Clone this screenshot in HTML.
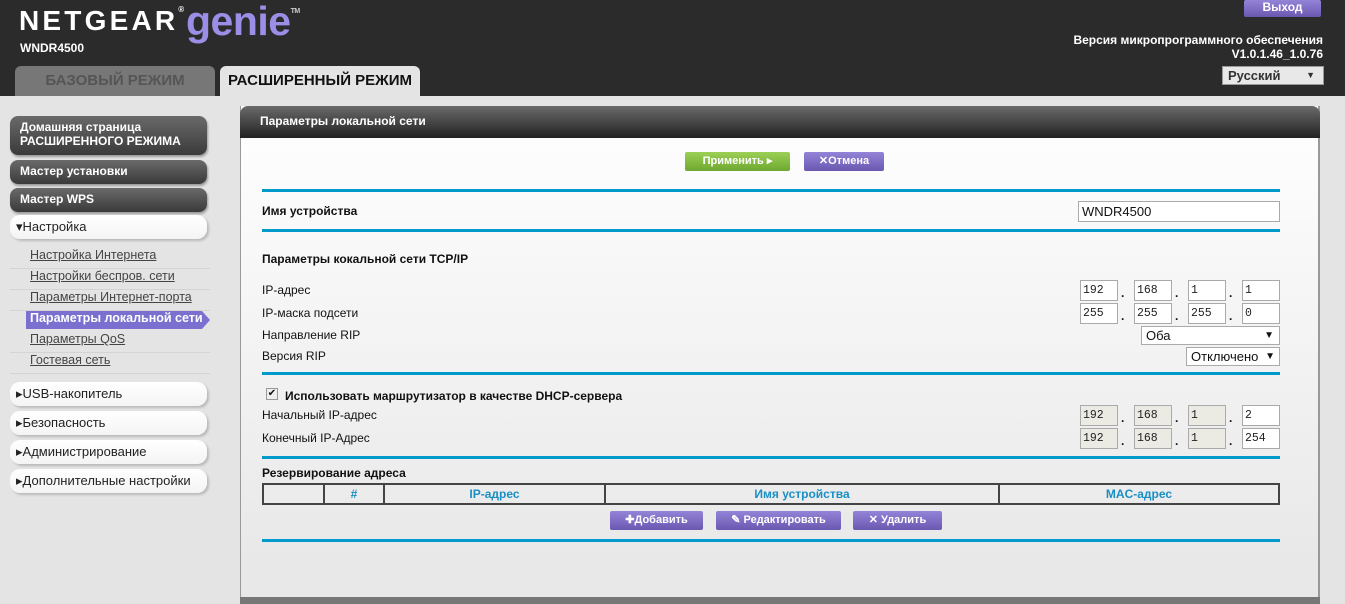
<!DOCTYPE html>
<html><head><meta charset="utf-8"><style>
*{margin:0;padding:0;box-sizing:border-box}
body{width:1345px;height:604px;overflow:hidden;background:#e4e4e4;font-family:"Liberation Sans",Arial,sans-serif;position:relative;font-size:12px;color:#111}
.a{position:absolute}
#hdr{left:0;top:0;width:1345px;height:96px;background:#2b2b2b}
.tab{top:66px;height:30px;border-radius:6px 6px 0 0;font-size:15px;font-weight:bold;text-align:center;line-height:30px}
.sb{left:10px;width:197px;border-radius:8px;color:#fff;font-weight:bold;font-size:12px;padding-left:10px;background:linear-gradient(#6a6a6a,#3a3a3a);box-shadow:1px 2px 2px #999}
.sw{left:10px;width:197px;height:24px;border-radius:10px;background:linear-gradient(#fff,#f4f4f4);box-shadow:2px 2px 2px #bbb;font-size:13px;color:#222;line-height:24px;padding-left:6px}
.sub{left:30px;font-size:12.5px;color:#444;text-decoration:underline}
.sep{left:10px;width:200px;height:1px;background:#d4d4d4}
.ln{left:262px;width:1018px;height:3px;background:#0099cc}
.lb{left:262px;font-size:12px}
.ip{width:38px;height:21px;border:1px solid #aaa;background:#fff;font-family:"Liberation Mono",monospace;font-size:11.5px;padding:3px 2px;color:#222}
.ip.g{background:#ebebe4}
.dot{font-size:12px;font-weight:bold}
.btn{height:19px;color:#fff;font-weight:bold;font-size:11px;text-align:center;line-height:19px;border-radius:2px}
.pb{background:linear-gradient(#9484d8,#6a58b0)}
</style></head><body>
<div id="hdr" class="a"></div>
<div class="a" style="left:19px;top:5px;color:#fff;font-size:28px;font-weight:bold;letter-spacing:3.2px">NETGEAR<span style="font-size:8px;vertical-align:top;letter-spacing:0">®</span></div>
<div class="a" style="left:186px;top:-2px;color:#9b8ee6;font-size:41px;font-weight:bold;letter-spacing:-0.5px">genie<span style="font-size:7px;vertical-align:top;color:#ccc;position:relative;top:10px">TM</span></div>
<div class="a" style="left:20px;top:41px;color:#fff;font-weight:bold;font-size:12px">WNDR4500</div>
<div class="a tab" style="left:15px;width:200px;background:#777;color:#555">БАЗОВЫЙ РЕЖИМ</div>
<div class="a tab" style="left:220px;width:200px;background:#e4e4e4;color:#111">РАСШИРЕННЫЙ РЕЖИМ</div>
<div class="a btn pb" style="left:1244px;top:0;width:77px;height:17px;line-height:15px;font-size:12px">Выход</div>
<div class="a" style="right:22px;top:33px;color:#fff;font-weight:bold;font-size:12px;text-align:right;line-height:14px">Версия микропрограммного обеспечения<br>V1.0.1.46_1.0.76</div>
<div class="a" style="left:1222px;top:66px;width:102px;height:19px;background:#e8e8e8;border:1px solid #999;font-weight:bold;font-size:13px;padding-left:5px;line-height:17px;color:#333">Русский<span style="position:absolute;right:8px;font-size:9px">▼</span></div>

<div class="a sb" style="top:116px;height:39px;padding-top:4px;line-height:14px">Домашняя страница<br>РАСШИРЕННОГО РЕЖИМА</div>
<div class="a sb" style="top:160px;height:24px;line-height:22px">Мастер установки</div>
<div class="a sb" style="top:188px;height:24px;line-height:22px">Мастер WPS</div>
<div class="a sw" style="top:215px">▾Настройка</div>
<div class="a sub" style="top:248px">Настройка Интернета</div><div class="a sep" style="top:268px"></div>
<div class="a sub" style="top:269px">Настройки беспров. сети</div><div class="a sep" style="top:289px"></div>
<div class="a sub" style="top:290px">Параметры Интернет-порта</div><div class="a sep" style="top:310px"></div>
<div class="a" style="left:26px;top:311px;width:184px;height:18px;background:#7b6fd0;clip-path:polygon(0 0,176px 0,100% 50%,176px 100%,0 100%)"></div>
<div class="a" style="left:30px;top:311px;color:#fff;font-weight:bold;font-size:12.5px">Параметры локальной сети</div>
<div class="a sub" style="top:332px">Параметры QoS</div><div class="a sep" style="top:352px"></div>
<div class="a sub" style="top:353px">Гостевая сеть</div><div class="a sep" style="top:373px"></div>
<div class="a sw" style="top:382px">▸USB-накопитель</div>
<div class="a sw" style="top:411px">▸Безопасность</div>
<div class="a sw" style="top:440px">▸Администрирование</div>
<div class="a sw" style="top:469px">▸Дополнительные настройки</div>

<div class="a" style="left:240px;top:106px;width:1080px;height:498px;background:linear-gradient(#fff 0,#fcfcfc 60px,#e8e8e8 460px);border-left:1px solid #999;border-right:2px solid #999"></div>
<div class="a" style="left:240px;top:106px;width:1080px;height:32px;border-radius:8px 8px 0 0;background:linear-gradient(#6a6a6a,#222);color:#fff;font-weight:bold;font-size:12px;line-height:30px;padding-left:20px">Параметры локальной сети</div>
<div class="a" style="left:240px;top:597px;width:1080px;height:7px;background:#777"></div>

<div class="a btn" style="left:685px;top:152px;width:105px;background:linear-gradient(#9ccf55,#6ea830)">Применить ▸</div>
<div class="a btn pb" style="left:804px;top:152px;width:80px">✕Отмена</div>

<div class="a ln" style="top:189px"></div>
<div class="a lb" style="top:204px;font-weight:bold">Имя устройства</div>
<div class="a" style="left:1078px;top:201px;width:202px;height:21px;border:1px solid #aaa;background:#fff;padding:2px 3px;font-size:13px">WNDR4500</div>
<div class="a ln" style="top:229px"></div>
<div class="a lb" style="top:252px;font-weight:bold">Параметры кокальной сети TCP/IP</div>
<div class="a lb" style="top:283px">IP-адрес</div>
<div class="a lb" style="top:306px">IP-маска подсети</div>
<div class="a lb" style="top:328px">Направление RIP</div>
<div class="a lb" style="top:349px">Версия RIP</div>

<div class="a ip" style="left:1080px;top:280px">192</div><div class="a dot" style="left:1121px;top:286px">.</div>
<div class="a ip" style="left:1134px;top:280px">168</div><div class="a dot" style="left:1175px;top:286px">.</div>
<div class="a ip" style="left:1188px;top:280px">1</div><div class="a dot" style="left:1229px;top:286px">.</div>
<div class="a ip" style="left:1242px;top:280px">1</div>
<div class="a ip" style="left:1080px;top:303px">255</div><div class="a dot" style="left:1121px;top:309px">.</div>
<div class="a ip" style="left:1134px;top:303px">255</div><div class="a dot" style="left:1175px;top:309px">.</div>
<div class="a ip" style="left:1188px;top:303px">255</div><div class="a dot" style="left:1229px;top:309px">.</div>
<div class="a ip" style="left:1242px;top:303px">0</div>
<div class="a" style="left:1141px;top:326px;width:139px;height:19px;border:1px solid #aaa;background:#fff;font-size:13px;padding-left:4px;line-height:17px">Оба<span style="position:absolute;right:5px;font-size:10px">▼</span></div>
<div class="a" style="left:1186px;top:347px;width:94px;height:19px;border:1px solid #aaa;background:#fff;font-size:13px;padding-left:4px;line-height:17px">Отключено<span style="position:absolute;right:4px;font-size:10px">▼</span></div>
<div class="a ln" style="top:372px"></div>

<div class="a" style="left:266px;top:388px;width:12px;height:12px;border:1px solid #999;background:#eee;font-size:10px;line-height:10px;text-align:center">✔</div>
<div class="a" style="left:285px;top:389px;font-weight:bold">Использовать маршрутизатор в качестве DHCP-сервера</div>
<div class="a lb" style="top:408px">Начальный IP-адрес</div>
<div class="a lb" style="top:431px">Конечный IP-Адрес</div>
<div class="a ip g" style="left:1080px;top:405px">192</div><div class="a dot" style="left:1121px;top:411px">.</div>
<div class="a ip g" style="left:1134px;top:405px">168</div><div class="a dot" style="left:1175px;top:411px">.</div>
<div class="a ip g" style="left:1188px;top:405px">1</div><div class="a dot" style="left:1229px;top:411px">.</div>
<div class="a ip" style="left:1242px;top:405px">2</div>
<div class="a ip g" style="left:1080px;top:428px">192</div><div class="a dot" style="left:1121px;top:434px">.</div>
<div class="a ip g" style="left:1134px;top:428px">168</div><div class="a dot" style="left:1175px;top:434px">.</div>
<div class="a ip g" style="left:1188px;top:428px">1</div><div class="a dot" style="left:1229px;top:434px">.</div>
<div class="a ip" style="left:1242px;top:428px">254</div>
<div class="a ln" style="top:456px"></div>

<div class="a lb" style="top:466px;font-weight:bold">Резервирование адреса</div>
<table class="a" style="left:262px;top:483px;width:1018px;height:22px;border-collapse:collapse;color:#1a8fc4;font-weight:bold;font-size:12px;text-align:center">
<tr><td style="border:2px solid #444;width:61px"></td><td style="border:2px solid #444;width:60px">#</td><td style="border:2px solid #444;width:221px">IP-адрес</td><td style="border:2px solid #444;width:394px">Имя устройства</td><td style="border:2px solid #444">MAC-адрес</td></tr></table>
<div class="a btn pb" style="left:610px;top:511px;width:93px">✚Добавить</div>
<div class="a btn pb" style="left:716px;top:511px;width:125px">✎ Редактировать</div>
<div class="a btn pb" style="left:853px;top:511px;width:89px">✕ Удалить</div>
<div class="a ln" style="top:539px"></div>
</body></html>
